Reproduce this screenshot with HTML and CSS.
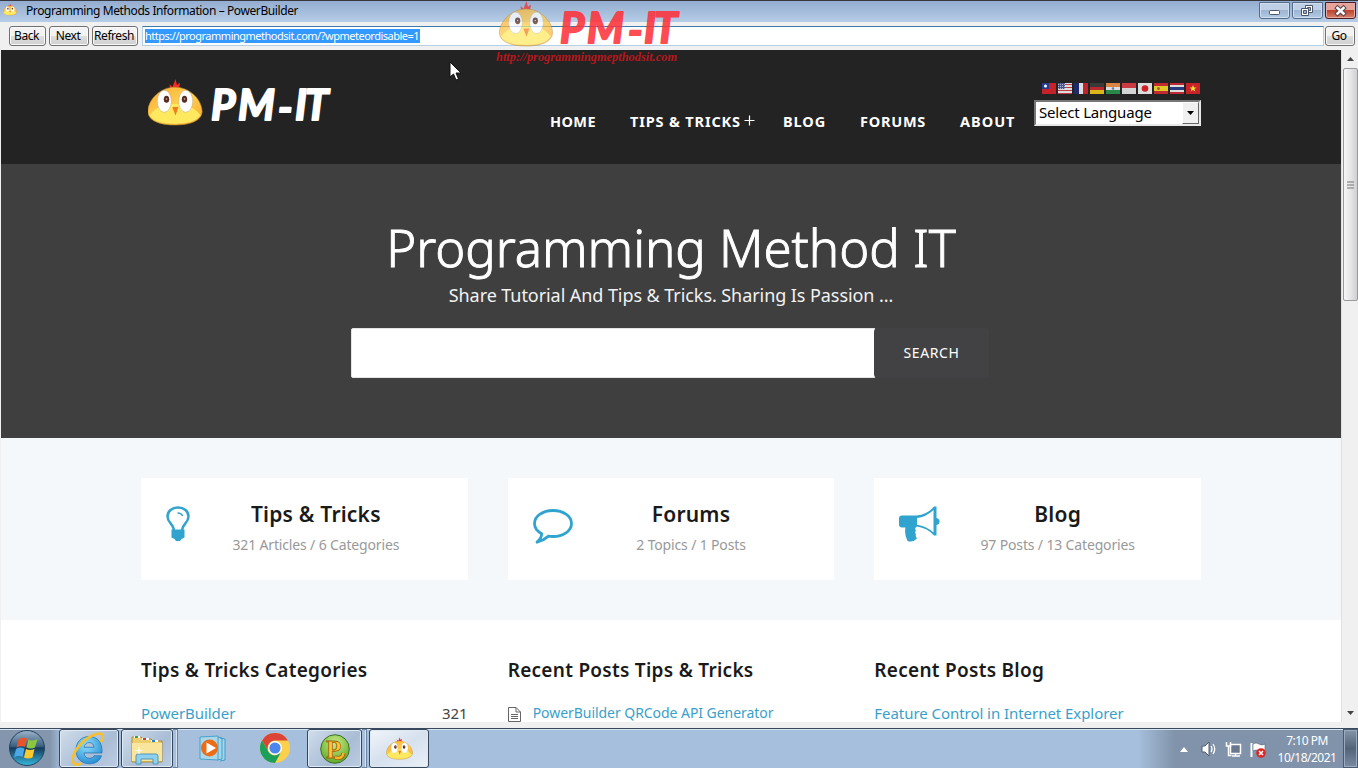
FILE: index.html
```html
<!DOCTYPE html>
<html lang="en">
<head>
<meta charset="utf-8">
<title>Programming Methods Information – PowerBuilder</title>
<link rel="stylesheet" href="styles.css">
</head>
<body>
<svg width="0" height="0" class="defs">
  <defs>
    <linearGradient id="face" x1="0" y1="0" x2="1" y2="1"><stop offset="0" stop-color="#f9a936"/><stop offset=".5" stop-color="#ffd04e"/><stop offset="1" stop-color="#f7a932"/></linearGradient>
    <linearGradient id="glass" x1="0" y1="0" x2="0" y2="1"><stop offset="0" stop-color="#9db4c8"/><stop offset=".45" stop-color="#3b6083"/><stop offset=".5" stop-color="#16395b"/><stop offset="1" stop-color="#35b8de"/></linearGradient>
    <radialGradient id="ie" cx=".4" cy=".3" r=".8"><stop offset="0" stop-color="#8fe0fd"/><stop offset="1" stop-color="#1f86d0"/></radialGradient>
    <radialGradient id="green" cx=".5" cy=".3" r=".8"><stop offset="0" stop-color="#c8ee86"/><stop offset="1" stop-color="#4f9f1c"/></radialGradient>
  </defs>
  <symbol id="chick" viewBox="0 0 56 47">
    <path d="M23 11 22.500 5l3 3L28.500 0l1.500 6 3-2.500L32 11z" fill="#f32a22"/>
    <path d="M28 8.200C42 8 55 20 55.200 33 54 43 41 46 28 46S2 43 .8 33C1 20 14 8 28 8.200z" fill="url(#face)" stroke="#b98325" stroke-width=".6"/>
    <path d="M2.500 36C7 31 13 26 21 25H35C43 26 49 31 53.500 36 49 43 40 44.700 28 44.700S7 43 2.500 36z" fill="#ffe95e"/>
    <ellipse cx="17.300" cy="22.300" rx="7" ry="11" fill="#fff" stroke="#b9aa91" stroke-width=".5"/>
    <ellipse cx="38.700" cy="22.300" rx="7" ry="11" fill="#fff" stroke="#b9aa91" stroke-width=".5"/>
    <ellipse cx="19.500" cy="20.300" rx="2.700" ry="3.500" fill="#582b1f"/><ellipse cx="37.500" cy="20.300" rx="2.700" ry="3.500" fill="#582b1f"/>
    <circle cx="19.500" cy="20" r=".8" fill="#cfc2bb"/><circle cx="37.500" cy="20" r=".8" fill="#cfc2bb"/>
    <path d="M25.300 28h6.200L28.500 36.500z" fill="#f37b20"/>
  </symbol>
</svg>

<div class="window">
  <header class="titlebar">
    <svg class="app-icon" width="14" height="13"><use href="#chick"/></svg>
    <span class="title">Programming Methods Information – PowerBuilder</span>
    <div class="win-buttons">
      <div class="wb"><svg width="31" height="17"><rect x="10.500" y="8.500" width="10" height="4" rx="1" fill="#fff" stroke="#4b566a"/></svg></div>
      <div class="wb"><svg width="31" height="17" fill="#fff" stroke="#4b566a"><path d="M13.500 3.500h7v7h-7z"/><path d="M15.500 5.500h3v3h-3z" fill="#9db4d0"/><path d="M9.500 6.500h7v7h-7z"/><path d="M11.500 8.500h3v3h-3z" fill="#9db4d0"/></svg></div>
      <div class="wb close"><svg width="31" height="17"><path d="M12.500 6l6 5.500M18.500 6l-6 5.500" stroke="#57464f" stroke-width="4.600" stroke-linecap="square"/><path d="M12.500 6l6 5.500M18.500 6l-6 5.500" stroke="#fff" stroke-width="2.500" stroke-linecap="square"/></svg></div>
    </div>
  </header>

  <div class="toolbar">
    <div class="btn back">Back</div><div class="btn next">Next</div><div class="btn refresh">Refresh</div>
    <div class="address"><span class="selected">https://programmingmethodsit.com/?wpmeteordisable=1</span></div>
    <div class="btn go">Go</div>
  </div>

  <div class="viewport">
    <main class="page">
      <div class="site-header"><div class="container head-row">
        <svg class="logo" width="192" height="56"><use href="#chick" width="56" height="47" y="5" x="-1"/><text class="logo-text" x="63 90 130 147 157" y="46 46 49 46 46">PM-IT</text></svg>
        <nav class="nav"><a class="n1">HOME</a><a class="n2">TIPS &amp; TRICKS<svg width="11" height="11"><path d="M5.500 .5v10M.5 5.500h10" stroke="#fff" stroke-width="1.200"/></svg></a><a class="n3">BLOG</a><a class="n4">FORUMS</a><a class="n5">ABOUT</a></nav>
        <div class="lang">
          <div class="flags">
            <svg viewBox="0 0 14 11"><path fill="#c52329" d="M0 0h14v11H0z"/><path fill="#243d8e" d="M0 0h7v6H0z"/><circle cx="3.500" cy="3" r="1.500" fill="#fff"/></svg>
            <svg viewBox="0 0 14 11"><path fill="#ddd" d="M0 0h14v11H0z"/><path stroke="#c33a43" d="M0 1.500h14M0 4.500h14M0 7.500h14M0 10.500h14"/><path fill="#46558c" d="M0 0h7v6H0z"/><path d="M0 1.500h7M0 3.500h7M0 5.500h7" stroke="#aeb6d3" stroke-dasharray="1"/></svg>
            <svg viewBox="0 0 14 11"><path fill="#ddd" d="M0 0h14v11H0z"/><path fill="#1d2a6c" d="M0 0h5v11H0z"/><path fill="#bd242d" d="M9 0h5v11H9z"/></svg>
            <svg viewBox="0 0 14 11"><path fill="#393939" d="M0 0h14v4H0z"/><path fill="#b8272b" d="M0 4h14v3H0z"/><path fill="#d9b719" d="M0 7h14v4H0z"/></svg>
            <svg viewBox="0 0 14 11"><path fill="#d98443" d="M0 0h14v4H0z"/><path fill="#ddd" d="M0 4h14v3H0z"/><path fill="#278848" d="M0 7h14v4H0z"/><circle cx="7" cy="5.500" r="1.300" fill="#667fac"/></svg>
            <svg viewBox="0 0 14 11"><path fill="#c93a43" d="M0 0h14v5H0z"/><path fill="#d4d4d4" d="M0 5h14v6H0z"/></svg>
            <svg viewBox="0 0 14 11"><path fill="#ddd" d="M0 0h14v11H0z"/><circle cx="7" cy="5.500" r="3.300" fill="#cf2028"/></svg>
            <svg viewBox="0 0 14 11"><path fill="#c32c2f" d="M0 0h14v11H0z"/><path fill="#e0c928" d="M0 3h14v5H0z"/><circle cx="4.500" cy="5.500" r="1.500" fill="#b65f24"/></svg>
            <svg viewBox="0 0 14 11"><path fill="#bf2a34" d="M0 0h14v11H0z"/><path fill="#ddd" d="M0 2h14v7H0z"/><path fill="#273a7b" d="M0 4h14v3H0z"/></svg>
            <svg viewBox="0 0 14 11"><path fill="#c72328" d="M0 0h14v11H0z"/><path fill="#f6dd35" d="M7 2l1 2.500h2.500l-2 1.500.8 2.500L7 7 4.700 8.500 5.500 6l-2-1.500H6z"/></svg>
          </div>
          <div class="select"><span>Select Language</span><div class="drop"><svg width="7" height="4"><path d="M0 0h7L3.500 4z"/></svg></div></div>
        </div>
      </div></div>

      <section class="hero">
        <h1>Programming Method IT</h1>
        <p class="tagline">Share Tutorial And Tips &amp; Tricks. Sharing Is Passion ...</p>
        <div class="search"><div class="search-input"></div><div class="search-btn"><span>SEARCH</span></div></div>
      </section>

      <section class="stats"><div class="container grid">
        <article class="card">
          <svg class="bulb" viewBox="0 0 24 36" width="24" height="36" fill="none" stroke="#30a3ce" stroke-width="2.500"><path d="M8 24C7.500 18 1.500 17 1.500 10.500 1.500 5 6 1.500 12 1.500S22.500 5 22.500 10.500C22.500 17 16.500 18 16 24"/><path d="M11.500 7q4 0 5 3" stroke-width="1.500"/><path d="M5.500 23.500h13v8l-3 1.500-1.500 2h-4L8.500 33l-3-1.500z" fill="#30a3ce" stroke="none"/></svg>
          <div class="card-text"><h3>Tips &amp; Tricks</h3><p>321 Articles / 6 Categories</p></div>
        </article>
        <article class="card">
          <svg class="bubble" viewBox="0 0 41 36" width="41" height="36"><path d="M20 2.500C30 2.500 38.500 8 38.500 15.500S30 28.500 20 28.500q-2.500 0-4.500-.4-5 4.400-11.500 6.100 4.400-3.600 4.800-8.500C4.500 23.500 1.500 19.500 1.500 15.500 1.500 8 10 2.500 20 2.500z" fill="none" stroke="#30a3ce" stroke-width="2.800" stroke-linejoin="round"/></svg>
          <div class="card-text"><h3>Forums</h3><p>2 Topics / 1 Posts</p></div>
        </article>
        <article class="card">
          <svg class="horn" viewBox="0 0 41 36" width="41" height="36"><path d="M3 9.500h14.500q11-1 17.500-9h2.500V12q3 .5 3 3.500t-3 3.500v10.500H35q-6.500-7.500-17-9-3 1.500-1 4-1.500 1.500 0 4-1 1.500 1 4-4 4.300-9.500 2.500Q5 28 6.500 21.500H3Q0 21.500 0 18.500v-6Q0 9.500 3 9.500z" fill="#30a3ce"/><path d="M18 12q9-1 16.500-8v22.500Q27 20 18 18.800z" fill="#fff"/></svg>
          <div class="card-text"><h3>Blog</h3><p>97 Posts / 13 Categories</p></div>
        </article>
      </div></section>

      <section class="lists"><div class="container grid">
        <div><h2>Tips &amp; Tricks Categories</h2><div class="row"><a>PowerBuilder</a><span class="count">321</span></div></div>
        <div><h2>Recent Posts Tips &amp; Tricks</h2><div class="row post"><svg width="13" height="15" fill="none" stroke="#666"><path d="M.5.500H8L12.500 5v9.500H.5zM8 .5V5h4.500M3 7.500h7M3 9.500h7M3 11.500h7"/></svg><a>PowerBuilder QRCode API Generator</a></div></div>
        <div><h2>Recent Posts Blog</h2><div class="row"><a>Feature Control in Internet Explorer</a></div></div>
      </div></section>
    </main>
    <div class="scrollbar">
      <svg width="7" height="4"><path d="M3.500 0L7 4H0z" fill="#444"/></svg>
      <div class="thumb"><svg width="7" height="8"><path d="M0 1h7M0 4h7M0 7h7" stroke="#777"/></svg></div>
      <svg class="down" width="7" height="4"><path d="M0 0h7L3.500 4z" fill="#444"/></svg>
    </div>
  </div>
</div>

<footer class="taskbar">
  <div class="start"><svg width="38" height="38" viewBox="0 0 38 38"><circle cx="19" cy="19" r="17.500" fill="url(#glass)" stroke="#24435f"/><path d="M10.500 10.500q4-3 8.500-1L17 18q-4-2-8.500.5z" fill="#e8542a"/><path d="M20.500 10.500q4 2 9-.5L27 18.500q-4 2-8.500 0z" fill="#8cc63e"/><path d="M8 20q4-2.500 8.500-.5L14.500 28q-4-2-8.500.5z" fill="#4aa8e4"/><path d="M18 20q4 2 8.500 0L24.500 28.500q-4.500 2-8.500 0z" fill="#fbc92c"/></svg></div>
  <div class="task ie"><svg width="34" height="34" viewBox="1 1 30 30"><path d="M16 5C9 5 4.500 10 4.500 17S9 29 16.500 29c5.500 0 9-2.500 10.500-7h-6.500c-1 1.600-2.200 2.200-4 2.200-3 0-4.700-1.700-4.900-4.700H27.500C28 10 23.500 5 16 5zm-4.300 9.500c.4-2.700 2-4.200 4.500-4.200s4 1.500 4.200 4.200z" fill="url(#ie)" stroke="#2778b5" stroke-width=".7"/><path d="M26.500 10C31 1 25 1 18 4.500 7 10.500-1 23 2.500 28.500c1 2 4 1.500 6.500 0" fill="none" stroke="#f6bf2d" stroke-width="2.400"/></svg></div>
  <div class="task folder"><svg width="34" height="32" viewBox="0 0 34 32"><path d="M2 4h9l2 2h8l2 2h9v21H2z" fill="#edcf70" stroke="#a98b3d"/><path d="M4 3h6v2H4zM12 5h7v2h-7zM21 7h7v2h-7z" fill="#fff"/><path d="M5 3h3v2H5z" fill="#33a543"/><path d="M13 5h3v2h-3z" fill="#d43b29"/><path d="M22 7h3v2h-3z" fill="#2d7fd0"/><path d="M2 10h30v18H2z" fill="#f9e69c"/><path d="M6 31V23q0-2 2-2h18q2 0 2 2v8h-5v-5H11v5z" fill="#8ed1ef" stroke="#5696b8"/><path d="M9 14v7M5.500 17.500h7" stroke="#fff" stroke-width="1.200"/></svg></div>
  <div class="stack"></div>
  <svg class="wmp" width="29" height="27" viewBox="0 0 29 27"><path d="M21 3l5 1v21l-5 1M18 2l5 1v21l-5 1" fill="#a3d7ed" stroke="#459bc4"/><path d="M1 2l18-1v24L1 24z" fill="#a9d8ed" stroke="#4ba0c8"/><circle cx="10.500" cy="13" r="8.500" fill="#ec6d15"/><path d="M7.500 7.500v11L17 13z" fill="#fff"/></svg>
  <svg class="chrome" width="30" height="30" viewBox="0 0 30 30"><circle cx="15" cy="15" r="15" fill="#fbd04c"/><path d="M2 7.500A15 15 0 0128 7.500H15A7.500 7.500 0 008.500 18.500z" fill="#db4437"/><path d="M2 7.500 8.500 18.700A7.500 7.500 0 0015 22.500L20.500 20 15 30A15 15 0 012 7.500z" fill="#1c9f59"/><circle cx="15" cy="15" r="7" fill="#fff"/><circle cx="15" cy="15" r="5.600" fill="#4a86ed"/></svg>
  <div class="task pb"><svg width="30" height="30" viewBox="0 0 30 30"><circle cx="15" cy="15" r="14.300" fill="url(#green)" stroke="#406e28"/><text x="6" y="24" class="pb-letter">P</text><path d="M15 23.500q8 2 8.500-4.500" fill="none" stroke="#9c6112" stroke-width="4"/><path d="M15 23.500q8 2 8.500-4.500" fill="none" stroke="#f5b727" stroke-width="2.500"/></svg></div>
  <div class="stack"></div>
  <div class="task active"><svg width="27" height="23"><use href="#chick"/></svg></div>
  <div class="tray">
    <svg class="up" width="8" height="5"><path d="M4 0l4 5H0z" fill="#fff"/></svg>
    <svg class="sound" width="16" height="16" viewBox="0 0 16 16"><path d="M1 5h3l4-4v14l-4-4H1z" fill="#fff" stroke="#4e5b6c"/><path d="M10 5q2 3 0 6M12 3q3.500 5 0 10" fill="none" stroke="#fff" stroke-width="1.300"/></svg>
    <svg class="net" width="17" height="16" viewBox="0 0 17 16"><path d="M5.500 3.500h10v9h-10zM7 15h8M10.500 12v3" fill="#67788f" stroke="#fff" stroke-width="1.500"/><path d="M1.500 1v4h4V1M3.500 5v9.500h3" fill="none" stroke="#fff" stroke-width="1.500"/></svg>
    <svg class="flag" width="16" height="16" viewBox="0 0 16 16"><path d="M1.500 1v14" stroke="#fff" stroke-width="2"/><path d="M3 2q3-2 6 0t6 0v7q-3 2-6 0T3 9z" fill="#fff" stroke="#566579" stroke-width=".6"/><circle cx="11" cy="11" r="4.800" fill="#da2925"/><path d="M9 9l4 4M13 9l-4 4" stroke="#fff" stroke-width="1.500"/></svg>
    <div class="clock"><span>7:10 PM</span><span>10/18/2021</span></div>
    <div class="show-desktop"></div>
  </div>
</footer>

<svg class="watermark" width="200" height="68"><use href="#chick" x="8" y="1" width="56" height="46" opacity=".72"/><text class="mark-text" x="70 97 138 154 164" y="43 43 46 43 43">PM-IT</text><text class="mark-url" x="6" y="61" textLength="181" lengthAdjust="spacingAndGlyphs">http://programmingmepthodsit.com</text></svg>
<svg class="cursor" width="14" height="20" viewBox="0 0 14 20"><path d="M1 1v15l3.500-3 2.500 6 2.500-1L7 12h5z" fill="#fff" stroke="#111"/></svg>
</body>
</html>
```
FILE: styles.css
```css
* { box-sizing: border-box; }
body { margin: 0; width: 1358px; height: 768px; overflow: hidden; position: relative; background: #f0f0f0; font-family: "Noto Sans", "Open Sans", sans-serif; color: #000; }
svg { display: block; flex: none; }
h1, h2, h3, p { margin: 0; }
span, a, h1, h2, h3, p { white-space: nowrap; }
.defs { position: absolute; }
.window { height: 728px; display: flex; flex-direction: column; }

.titlebar { height: 22px; flex: none; border-top: 1px solid #38393f; background: linear-gradient(#94add0, #b6cde7); display: flex; align-items: flex-start; padding: 1px 2px 0 3px; }
.app-icon { margin-top: 1px; }
.title { font-size: 12px; line-height: 18px; margin-left: 9px; letter-spacing: -0.4px; }
.win-buttons { display: flex; gap: 2px; margin-left: auto; }
.wb { width: 31px; height: 17px; border: 1px solid #566a8a; border-radius: 0 0 3px 3px; background: linear-gradient(#bfd0e6 48%, #9db5d2 50%, #b3cae5); box-shadow: inset 0 0 0 1px #d0dfef; }
.wb svg { margin: -1px; }
.wb.close { border-color: #4a1b25; background: linear-gradient(#e5a399 45%, #bd452f 50%, #d7806c); box-shadow: inset 0 0 0 1px #e6aaa0; }

.toolbar { height: 28px; flex: none; display: flex; align-items: flex-start; padding: 4px 3px 0 9px; }
.btn { height: 20px; border: 1px solid #707070; border-radius: 3px; background: linear-gradient(#f3f3f3 49%, #dedede 50%, #d0d0d0); box-shadow: inset 0 0 0 1px #fafafa; font-size: 12px; line-height: 18px; text-align: center; margin-right: 3px; padding-right: 2px; letter-spacing: -0.45px; }
.back { width: 37px; }
.next { width: 40px; }
.refresh { width: 46px; }
.go { width: 30px; margin: 0; }
.address { width: 1182px; height: 20px; margin: 0 1px; background: #fff; border: 1px solid #b5cfe7; border-top-color: #3d7bad; padding: 2px 2px; font-size: 11px; line-height: 14px; }
.selected { display: inline-block; height: 14px; background: #3399ff; color: #fff; letter-spacing: -0.49px; border-right: 1px solid #d47a1c; }

.viewport { height: 672px; display: flex; padding-left: 1px; }
.page { width: 1340px; background: #fff; overflow: hidden; }
.container { width: 1060px; margin: 0 auto; }
.site-header { height: 114px; background: #232323; }
.head-row { height: 114px; display: flex; }
.logo { margin: 24px 0 0 7px; }
.logo-text { font-family: Lato, sans-serif; font-style: italic; font-weight: 700; font-size: 42px; fill: #fff; stroke: #fff; stroke-width: 2; stroke-linejoin: round; }
.nav { margin: 60px 0 0 210px; display: flex; height: 22px; width: 484px; font-size: 14.5px; font-weight: 700; line-height: 22px; color: #fff; }
.n1 { width: 80px; letter-spacing: .4px; }
.n2 { width: 153px; display: flex; letter-spacing: .85px; }
.n2 svg { margin: 5px 0 0 3px; }
.n3 { width: 77px; letter-spacing: .9px; }
.n4 { width: 100px; letter-spacing: .75px; }
.n5 { letter-spacing: 1px; }
.lang { width: 167px; margin-top: 33px; }
.flags { display: flex; gap: 2px; padding-left: 8px; }
.flags svg { width: 14px; height: 11px; }
.select { width: 167px; height: 26px; margin-top: 6px; background: #fff; border: 2px solid #777; border-right-color: #e8e8e8; border-bottom-color: #e8e8e8; display: flex; justify-content: space-between; font-size: 15px; line-height: 20px; padding-left: 3px; letter-spacing: -0.2px; }
.drop { width: 17px; background: #f0f0f0; border: 1px solid #fff; border-right-color: #666; border-bottom-color: #666; display: grid; place-items: center; }

.hero { height: 274px; background: #3f3f3f; color: #fff; display: flex; flex-direction: column; align-items: center; padding-top: 49px; }
.hero h1 { font-weight: 300; font-size: 51px; line-height: 68px; -webkit-text-stroke: .9px #fff; letter-spacing: -0.05px; }
.tagline { font-size: 18px; line-height: 26px; margin-top: 1px; color: #f2f2f2; letter-spacing: -0.07px; }
.search { display: flex; width: 638px; height: 50px; margin: 20px 2px 0 0; }
.search-input { width: 525px; background: #fff; border: 1px solid #e4e4e4; border-radius: 2px; }
.search-btn { width: 115px; margin-left: -2px; background: #424244; border-radius: 4px; font-size: 14px; line-height: 50px; text-align: center; letter-spacing: .6px; }

.stats { height: 182px; background: #f4f8fb; padding-top: 40px; }
.grid { display: grid; grid-template-columns: repeat(3, 1fr); gap: 40px; }
.card { height: 102px; background: #fff; display: flex; padding-left: 25px; }
.bulb { margin-top: 28px; }
.bubble { margin-top: 30px; }
.horn { margin-top: 28px; }
.card-text { flex: 1; text-align: center; padding: 22px 26px 0 0; }
.card h3 { font-size: 21px; line-height: 28px; font-weight: 600; color: #1a1a1a; letter-spacing: .2px; }
.card p { font-size: 14px; line-height: 20px; margin-top: 7px; color: #999; letter-spacing: -0.15px; }

.lists { padding-top: 37px; }
.lists h2 { font-size: 19px; line-height: 26px; font-weight: 600; color: #1a1a1a; letter-spacing: .28px; }
.row { display: flex; justify-content: space-between; font-size: 15px; line-height: 22px; margin-top: 19px; color: #3a9fca; letter-spacing: -0.05px; }
.post { justify-content: flex-start; gap: 12px; font-size: 14px; }
.post svg { margin-top: 5px; }
.count { color: #444; }

.scrollbar { width: 17px; background: #f0f0f0; border-left: 1px solid #e0e0e0; display: flex; flex-direction: column; align-items: center; padding: 7px 0 7px 1px; }
.thumb { width: 15px; height: 233px; margin-top: 7px; border: 1px solid #999; border-radius: 2px; background: linear-gradient(90deg, #f6f6f6, #e6e6e8 50%, #cfcfd2); display: grid; place-items: center; }
.down { margin-top: auto; }

.taskbar { height: 40px; border-top: 1px solid #394a5e; box-shadow: inset 0 1px #d7e4f1; background: linear-gradient(90deg, #8396ad 0 50px, #a6bfdc 62px, #a6bfdc 1138px, #8093aa 1175px); display: flex; align-items: flex-start; }
.start { margin: 0 0 0 8px; width: 51px; }
.task { height: 39px; border: 1px solid #36475c; border-radius: 3px; box-shadow: inset 0 0 0 1px #dfe9f4; background: linear-gradient(135deg, #d0ddeb, #a9bdd5 60%, #bccde2); display: grid; place-items: center; }
.ie { width: 60px; }
.folder { width: 52px; margin-left: 2px; }
.stack { width: 5px; height: 39px; border: 1px solid #6c819c; border-left: 0; box-shadow: inset -1px 0 #d7e4f1; }
.wmp { margin: 6px 0 0 21px; }
.chrome { margin: 4px 0 0 32px; }
.pb { width: 55px; margin-left: 17px; }
.pb-letter { font: 700 25px "Liberation Serif", serif; fill: #ffc62e; stroke: #9c6112; stroke-width: .8; }
.active { width: 60px; margin-left: 2px; background: linear-gradient(150deg, #f1f5fa, #d6e1ee 50%, #e9f0f7); }
.tray { margin-left: auto; display: flex; color: #fff; height: 39px; }
.up { margin-top: 18px; }
.sound { margin: 12px 0 0 13px; }
.net { margin: 12px 0 0 8px; }
.flag { margin: 13px 0 0 8px; }
.clock { width: 77px; margin: 0 -5px 0 4px; display: flex; flex-direction: column; align-items: center; font-size: 12px; line-height: 17px; padding: 3px 3px 0 0; letter-spacing: -0.5px; }
.show-desktop { width: 15px; border: 1px solid #485a70; box-shadow: inset 0 0 0 1px #9aabbf; background: linear-gradient(#8394a9, #536479 50%, #798ba2); margin-left: 1px; }

.watermark { position: absolute; left: 490px; top: 0; }
.mark-text { font-family: Lato, sans-serif; font-style: italic; font-weight: 700; font-size: 42px; fill: #ff2f38; stroke: #ff2f38; stroke-width: 2; stroke-linejoin: round; opacity: .86; }
.mark-url { font-family: "Liberation Serif", serif; font-style: italic; font-weight: 700; font-size: 12px; fill: #c5161c; opacity: .9; }
.cursor { position: absolute; left: 449px; top: 61px; }
```
